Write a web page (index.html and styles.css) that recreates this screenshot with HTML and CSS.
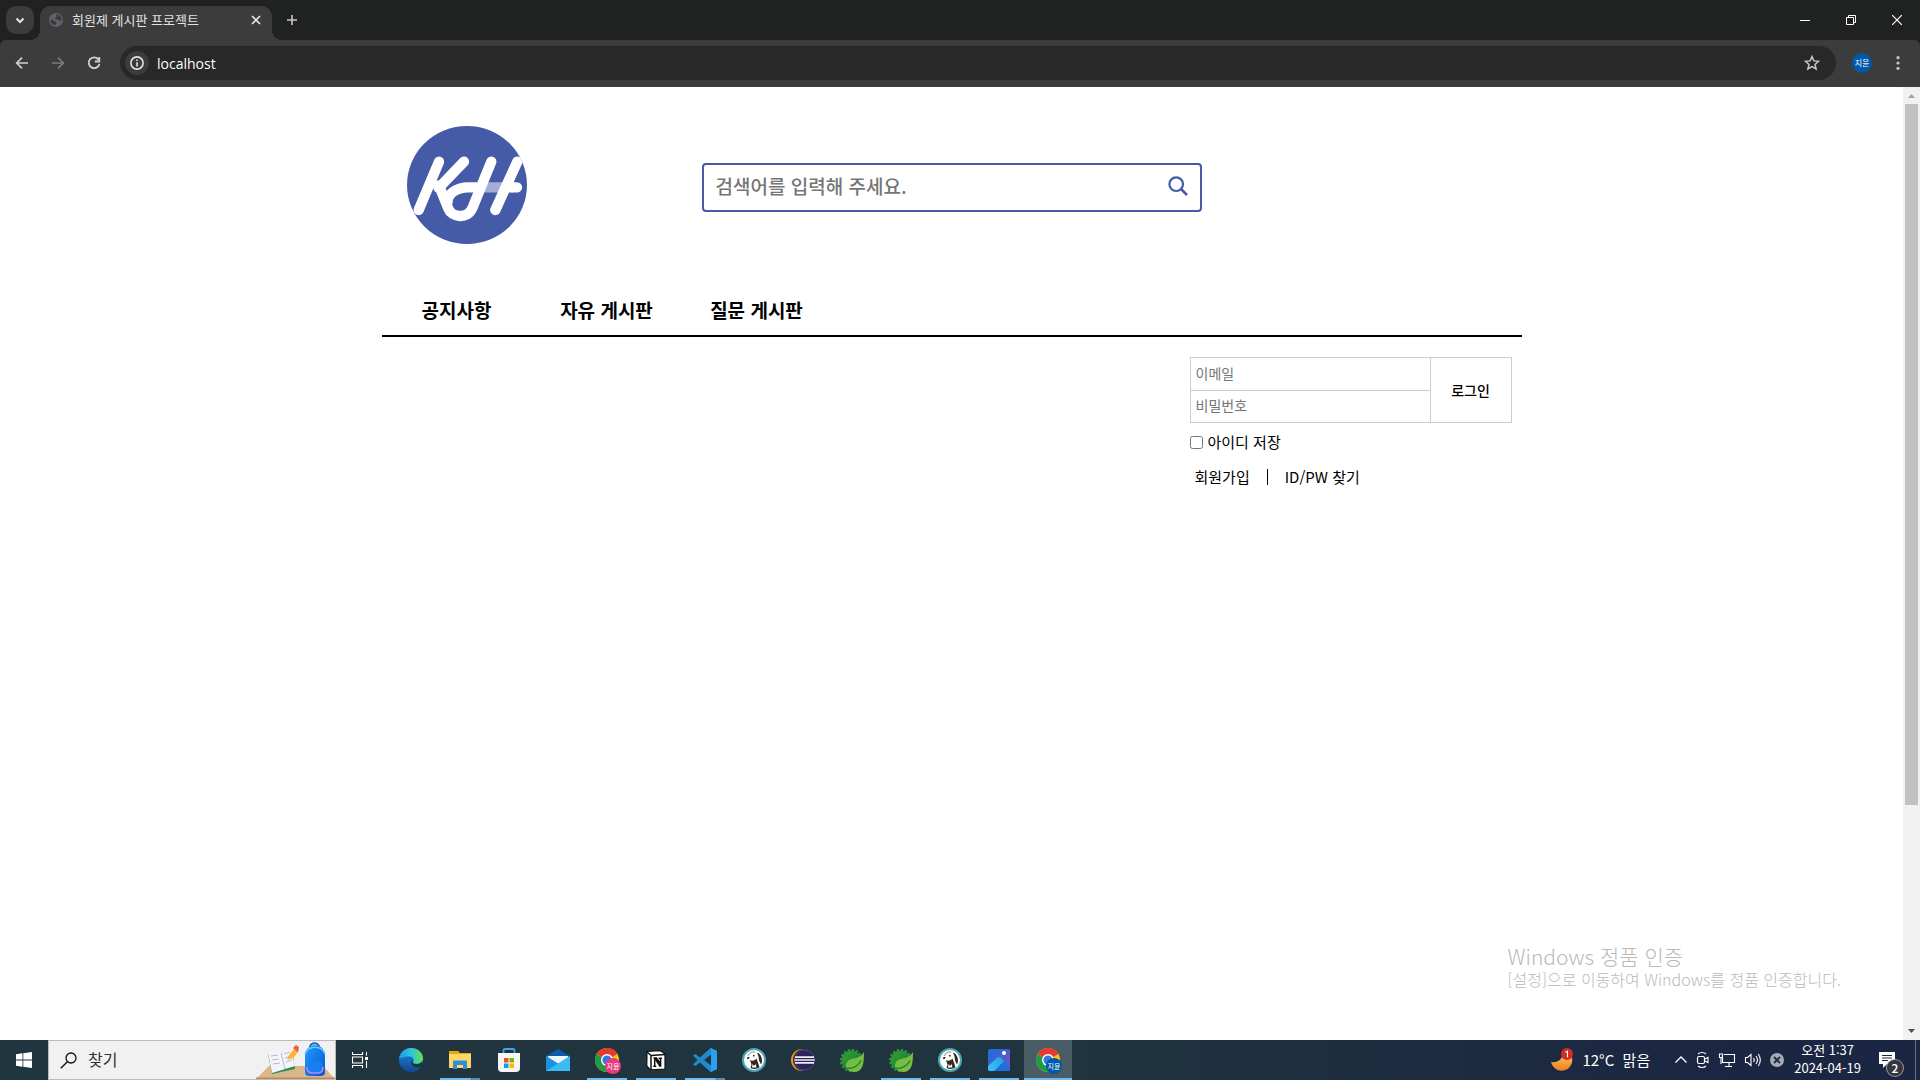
FILE: index.html
```html
<!DOCTYPE html>
<html lang="ko">
<head>
<meta charset="utf-8">
<title>회원제 게시판 프로젝트</title>
<link rel="stylesheet" href="styles.css">
</head>
<body>
<div class="browser">
<header class="tabstrip">
  <button class="tab-search" aria-label="탭 검색"><svg width="16" height="16" viewBox="0 0 16 16"><path d="M4.500 6.500 8 10l3.500-3.500" fill="none" stroke="#e3e3e3" stroke-width="2"/></svg></button>
  <div class="tab">
    <svg width="14" height="14" viewBox="0 0 14 14"><circle cx="7" cy="7" r="7" fill="#5f6368"/><path d="M1.500 7c2-.5 3 .2 4 1.200s2 .6 2 1.800-1 1-1 2.200C4 12.200 1.600 10 1.500 7zM7 1.500c-.2 1.200.8 1 .8 2S6 4.500 6 5.500s2 .7 3 1.500 2.500.8 3.400.4C13 4 10.500 1.500 7 1.500z" fill="#37393b"/></svg>
    <span class="tab-title">회원제 게시판 프로젝트</span>
    <button class="tab-close" aria-label="탭 닫기"><svg width="10" height="10" viewBox="0 0 10 10"><path d="m1 1 8 8M9 1 1 9" stroke="#e3e3e3" stroke-width="1.700"/></svg></button>
  </div>
  <button class="new-tab" aria-label="새 탭"><svg width="12" height="12" viewBox="0 0 12 12"><path d="M6 1v10M1 6h10" stroke="#c7c7c7" stroke-width="1.600"/></svg></button>
  <div class="window-buttons">
    <button aria-label="최소화"><svg width="10" height="10" viewBox="0 0 10 10"><path d="M0 5.500h10" stroke="#fff"/></svg></button>
    <button aria-label="이전 크기로"><svg width="10" height="10" viewBox="0 0 10 10"><path d="M.5 2.500h7v7h-7zM2.500 2.500v-2h7v7h-2" fill="none" stroke="#fff"/></svg></button>
    <button aria-label="닫기"><svg width="10" height="10" viewBox="0 0 10 10"><path d="m0 0 10 10M10 0 0 10" stroke="#fff" stroke-width="1.200"/></svg></button>
  </div>
</header>

<div class="toolbar">
  <div class="nav-buttons">
    <button aria-label="뒤로"><svg width="14" height="14" viewBox="0 0 14 14"><path d="M13 7H2m5-5.300L1.700 7 7 12.300" fill="none" stroke="#d0d0d0" stroke-width="1.700"/></svg></button>
    <button aria-label="앞으로"><svg width="14" height="14" viewBox="0 0 14 14"><path d="M1 7h11M7 1.700 12.300 7 7 12.300" fill="none" stroke="#7c7c7c" stroke-width="1.700"/></svg></button>
    <button aria-label="새로고침"><svg width="14" height="14" viewBox="0 0 14 14"><path d="M11.300 3.300A5.400 5.400 0 1 0 12.400 8M12.300 1v4.500H7.800" fill="none" stroke="#d0d0d0" stroke-width="1.800"/></svg></button>
  </div>
  <div class="omnibox">
    <button class="site-info" aria-label="사이트 정보"><svg width="14" height="14" viewBox="0 0 14 14"><circle cx="7" cy="7" r="6.100" fill="none" stroke="#e3e3e3" stroke-width="1.600"/><path d="M7 6.200v4.200M7 3.500v1.600" stroke="#e3e3e3" stroke-width="1.600"/></svg></button>
    <input class="address" type="text" value="localhost" aria-label="주소창">
    <button class="star" aria-label="북마크"><svg width="16" height="16" viewBox="0 0 16 16"><path d="m8 1.600 1.900 4.300 4.700.4-3.600 3.100 1.100 4.600L8 11.600 3.900 14 5 9.400 1.400 6.300l4.700-.4z" fill="none" stroke="#c7c7c7" stroke-width="1.500"/></svg></button>
  </div>
  <button class="profile">지윤</button>
  <button class="menu" aria-label="메뉴"><svg width="4" height="14" viewBox="0 0 4 14"><g fill="#c7c7c7"><circle cx="2" cy="1.700" r="1.600"/><circle cx="2" cy="7" r="1.600"/><circle cx="2" cy="12.300" r="1.600"/></g></svg></button>
</div>
</div>

<div class="viewport">
  <main class="page">
    <div class="site-header">
      <a href="#" class="logo" aria-label="KH">
        <svg width="120" height="118" viewBox="81 48 360 354">
          <defs><clipPath id="disc"><ellipse cx="261" cy="225" rx="180" ry="177"/></clipPath></defs>
          <ellipse cx="261" cy="225" rx="180" ry="177" fill="#465ba8"/>
          <g clip-path="url(#disc)" fill="none" stroke="#fff" stroke-width="31" stroke-linecap="round" stroke-linejoin="round">
            <path d="M310 232h90" stroke="#a5aed5" stroke-linecap="butt"/>
            <path d="M177 155 116 300M252 155l-76 79M177 226l28 70c9 24 57 36 73-4L334 155"/>
            <path d="M305 232h-40c-35 0-68 20-62 52"  stroke-linecap="butt"/>
            <path d="M412 155l-66 145M394 232h17"/>
          </g>
        </svg>
      </a>
      <form class="search">
        <input type="search" placeholder="검색어를 입력해 주세요." aria-label="검색어">
        <button type="button" aria-label="검색"><svg width="20" height="20" viewBox="0 0 20 20"><circle cx="8.200" cy="8.200" r="6.800" fill="none" stroke="#455ba8" stroke-width="2.200"/><path d="m13 13 6 6" stroke="#455ba8" stroke-width="2.600"/></svg></button>
      </form>
    </div>
    <nav class="site-nav"><a href="#">공지사항</a><a href="#">자유 게시판</a><a href="#">질문 게시판</a></nav>
    <form class="login">
      <div class="login-box">
        <div class="fields">
          <input type="text" placeholder="이메일" aria-label="이메일">
          <input type="password" placeholder="비밀번호" aria-label="비밀번호">
        </div>
        <button type="button">로그인</button>
      </div>
      <label class="save"><input type="checkbox">아이디 저장</label>
      <div class="links"><a href="#">회원가입</a><span class="bar"></span><a href="#">ID/PW 찾기</a></div>
    </form>
  </main>
  <div class="scrollbar">
    <svg width="17" height="17" viewBox="0 0 17 17"><path d="m5 11 3.500-4 3.500 4z" fill="#a3a3a3"/></svg>
    <div class="track"><div class="thumb"></div></div>
    <svg width="17" height="17" viewBox="0 0 17 17"><path d="m5 6 3.500 4L12 6z" fill="#505050"/></svg>
  </div>
  <div class="watermark"><p class="mark-title">Windows 정품 인증</p><p class="mark-text">[설정]으로 이동하여 Windows를 정품 인증합니다.</p></div>
</div>

<svg class="symbols" width="0" height="0">
  <defs>
    <linearGradient id="edgeA" x1="0" y1="0" x2="1" y2="0"><stop offset="0" stop-color="#1c9be6"/><stop offset=".5" stop-color="#2fc2df"/><stop offset="1" stop-color="#62e24b"/></linearGradient>
    <linearGradient id="edgeB" x1="0" y1="0" x2="0" y2="1"><stop offset="0" stop-color="#1b87dc"/><stop offset="1" stop-color="#104a91"/></linearGradient>
    <linearGradient id="leaf" x1="0" y1="0" x2="1" y2="1"><stop offset="0" stop-color="#3a9f35"/><stop offset="1" stop-color="#0a7a35"/></linearGradient>
    <linearGradient id="photo" x1="0" y1="0" x2="1" y2="1"><stop offset="0" stop-color="#1273d6"/><stop offset=".5" stop-color="#4a5fd0"/><stop offset="1" stop-color="#8b49bd"/></linearGradient>
    <linearGradient id="hill" x1="0" y1="1" x2="1" y2="0"><stop offset="0" stop-color="#35c6f5"/><stop offset="1" stop-color="#2b9fe8"/></linearGradient>
    <linearGradient id="moon" x1="0" y1="0" x2="0" y2="1"><stop offset="0" stop-color="#ffcb66"/><stop offset="1" stop-color="#ef7e1a"/></linearGradient>
    <linearGradient id="bag" x1="0" y1="0" x2="1" y2="1"><stop offset="0" stop-color="#1ba0ff"/><stop offset="1" stop-color="#0a56cf"/></linearGradient>
  </defs>
  <symbol id="chrome" viewBox="0 0 24 24"><circle cx="12" cy="12" r="12" fill="#fbc116"/><path d="M12 12 1.600 6A12 12 0 0 1 22.400 6z" fill="#e33b2e"/><path d="M12 0a12 12 0 0 1 10.400 6H12z" fill="#e33b2e"/><path d="M1.600 6A12 12 0 0 0 12 24l5.200-9L12 12z" fill="#229a48"/><circle cx="12" cy="12" r="6" fill="#fff"/><circle cx="12" cy="12" r="4.600" fill="#3478e5"/></symbol>
  <symbol id="spring" viewBox="0 0 24 24"><circle cx="11.500" cy="12.500" r="10" fill="url(#leaf)"/><circle cx="11.500" cy="12.500" r="10.300" fill="none" stroke="#2f9136" stroke-width="2.600" stroke-dasharray="2.400 1.640"/><path d="M24 4c0 12-1 20-10 20C5 24 4 15 9 12c5-2.500 11-1 15-8z" fill="#76bd42"/><path d="M5 20.500c7 .5 13-2 16-8" fill="none" stroke="#217d34" stroke-width="1.400"/></symbol>
  <symbol id="beaver" viewBox="0 0 24 24"><circle cx="12" cy="12" r="11" fill="#fff" stroke="#48a9b4" stroke-width="2"/><path d="M15 4.500c3 1 5 4 5 8 0 2-.5 3-1 4l-2-4-.5-4z" fill="#382923"/><path d="M8 12c2 1.500 5 .5 6.500-1.500l1.500 4 1.500 5c-2 1.500-6 2-9 .5l1-3.500z" fill="#382923"/><path d="m10.500 16 1.500 2 1.500-2 1 3.500h-4.500z" fill="#fff"/><path d="M5.500 9h2.200l-1 2H5zM11 7h1.600v1.500H11z" fill="#382923"/><path d="M6 8c1-3 4-4.500 7-4" fill="none" stroke="#665a55" stroke-width=".7"/></symbol>
</svg>

<footer class="taskbar">
  <button class="start" aria-label="시작"><svg width="16" height="16" viewBox="0 0 16 16"><path d="M0 2.200 6.500 1.300v6.200H0zM7.300 1.200 16 0v7.500H7.300zM0 8.400h6.500v6.300L0 13.800zM7.300 8.400H16V16l-8.700-1.200z" fill="#fff"/></svg></button>
  <div class="finder">
    <svg width="17" height="17" viewBox="0 0 17 17"><circle cx="11" cy="6" r="5" fill="none" stroke="#111" stroke-width="1.300"/><path d="M7.300 9.700.8 16.200" stroke="#111" stroke-width="1.400"/></svg>
    <input type="text" placeholder="찾기" aria-label="찾기">
    <svg width="79" height="38" viewBox="0 0 79 38"><path d="M13 25h54l12 13H0z" fill="#dcb68b"/><path d="M0 36.500h79V38H0z" fill="#b98a5a"/><path d="m12 13 4 20 23-5-2-14z" fill="#2b8f4a"/><path d="m12 12 11-2 3 2 9-4 4 17-10 3-3 1-10 3z" fill="#f4f5fa"/><path d="m25 12 4 16M15 15l7-1M16 19l7-1M17 23l7-1M28 13l6-2M29 17l6-2M30 21l6-2" stroke="#b6bccb" stroke-width="1"/><path d="m31 19 2-5 6-7 4 3-6 7z" fill="#ffb13b"/><path d="m37 7 3-3 3 2-1 5z" fill="#f25a4a"/><path d="M54 6c0-5 9-5 9 0" fill="none" stroke="#1668d0" stroke-width="2"/><path d="M49 15c0-6 4-11 10-11s10 5 10 11v16c0 3-2 4-4 4H53c-2 0-4-1-4-4z" fill="url(#bag)"/><path d="M49 13c3-9 17-9 20 0" fill="none" stroke="#73c5ff" stroke-width="1.500"/><path d="M51 27c0-11 16-11 16 0v4H51z" fill="#167ef0"/><path d="M51 26c0 6 3 6 8 6s8 0 8-6" fill="none" stroke="#b785ff" stroke-width="1.500"/></svg>
  </div>
  <button class="task" aria-label="작업 보기"><svg width="17" height="16" viewBox="0 0 17 16"><path d="M.5 0v2.500h10V0M.5 16v-2.500h10V16M.5 5h10v6H.5zM14.500 0v3.500M14.500 9v7" fill="none" stroke="#fff" stroke-width="1.100"/><path d="M13 5h3v3h-3z" fill="#fff"/></svg></button>
  <div class="apps">
    <button class="task" aria-label="Edge"><svg width="24" height="24" viewBox="0 0 24 24"><circle cx="12" cy="12" r="12" fill="url(#edgeB)"/><path d="M0 11C1 4 6 0 12 0c7 0 12 5 12 10 0 4-3 6-6.500 6-3 0-4-1-3.500-2 1.500-2 .5-5-3-5.500C6 8 1 10 0 11z" fill="url(#edgeA)"/><path d="M14 14c-.5 1 .5 2 3.500 2 2.500 0 4-.8 5.500-2.500v4C21 20 17 20 14.500 18.500 12 17 12 13.500 13.500 12z" fill="#20363f"/></svg></button>
    <button class="task run stack" aria-label="파일 탐색기"><svg width="22" height="20" viewBox="0 0 22 20"><path d="M0 1h9l2 2h11v15H0z" fill="#e9a60e"/><path d="M0 4h22v14H0z" fill="#ffd669"/><path d="M4 10.500h14V19h-4v-4H8v4H4z" fill="#2f8fd8"/></svg></button>
    <button class="task" aria-label="Microsoft Store"><svg width="24" height="24" viewBox="0 0 24 24"><path d="M6.500 6V2.500c0-1 .5-1.500 1.500-1.500h8c1 0 1.500.5 1.500 1.500V6" fill="none" stroke="#38a9ea" stroke-width="1.800"/><path d="M1 5h22v15q0 4-4 4H5q-4 0-4-4z" fill="#f5f5f5"/><path d="M7 10h4.500v4.500H7z" fill="#f25022"/><path d="M12.500 10H17v4.500h-4.500z" fill="#7fba00"/><path d="M7 15.500h4.500V20H7z" fill="#00a4ef"/><path d="M12.500 15.500H17V20h-4.500z" fill="#ffb900"/></svg></button>
    <button class="task" aria-label="메일"><svg width="24" height="24" viewBox="0 0 24 24"><path d="M0 8 12 1l12 7v3H0z" fill="#0d5cab"/><path d="M2 8h20v9H2z" fill="#f2f5f8"/><path d="M0 8l12 8 12-8v15H0z" fill="#29a9ec"/><path d="m0 8 24 15H0z" fill="#1c8fdf"/><path d="M24 8 0 23h24z" fill="#38bcf3"/></svg></button>
    <button class="task run" aria-label="Chrome 지윤"><svg width="24" height="24"><use href="#chrome"/></svg><span class="badge pink">지윤</span></button>
    <button class="task run" aria-label="Notion"><svg width="20" height="20" viewBox="0 0 20 20"><path d="M1 1.500 14 .6 19 4v15l-14.500.8L.8 16z" fill="#fff" stroke="#111" stroke-width="1.200"/><path d="m1 2 4 3.500v14M5 5.500 19 4.500" fill="none" stroke="#111" stroke-width="1.500"/><path d="M7.500 8h3l4 6V9M8.700 8v8M7.300 16.200h3M12.700 8.300h3.200M14.600 8.500v8" fill="none" stroke="#111" stroke-width="1.500"/><path d="m9 8 5.500 8.500" stroke="#111" stroke-width="2.200"/></svg></button>
    <button class="task run stack" aria-label="VS Code"><svg width="24" height="24" viewBox="0 0 24 24"><path d="m17.500 0 6.500 3v18l-6.500 3L7 14.500 2.500 18 0 16.500 4.500 12 0 7.500 2.500 6 7 9.500zM18 6.500 11 12l7 5.500z" fill="#2489ca" fill-rule="evenodd"/><path d="m18 0 6 3v18l-6 3z" fill="#2ba0f0"/></svg></button>
    <button class="task" aria-label="DBeaver"><svg width="24" height="24"><use href="#beaver"/></svg></button>
    <button class="task" aria-label="Eclipse"><svg width="24" height="24" viewBox="0 0 24 24"><circle cx="11" cy="12" r="11" fill="#f7941e"/><circle cx="13" cy="12" r="11" fill="#20343f"/><circle cx="13.500" cy="12" r="10" fill="#2c2255" stroke="#51458a"/><path d="M4 9.200h19M3.300 12h20.400M4 14.800h19" stroke="#f0edf8" stroke-width="1.700"/></svg></button>
    <button class="task" aria-label="Spring"><svg width="24" height="24"><use href="#spring"/></svg></button>
    <button class="task run" aria-label="Spring Tools"><svg width="24" height="24"><use href="#spring"/></svg></button>
    <button class="task run" aria-label="DBeaver"><svg width="24" height="24"><use href="#beaver"/></svg></button>
    <button class="task run" aria-label="사진"><svg width="22" height="22" viewBox="0 0 22 22"><rect width="22" height="22" rx="2" fill="url(#photo)"/><path d="m3 22 7-12q2-2 4 0l8 8v2q0 2-2 2z" fill="#1f70dc"/><path d="m0 17 9-8q2-2 4 0l3 3-10 10H2q-2 0-2-2z" fill="url(#hill)"/><circle cx="16" cy="4" r="2" fill="#fff"/></svg></button>
    <button class="task run active" aria-label="Chrome 지윤"><svg width="24" height="24"><use href="#chrome"/></svg><span class="badge blue">지윤</span></button>
  </div>
  <div class="tray">
    <button class="weather"><svg width="24" height="24" viewBox="0 0 24 24"><path d="M1 14c5 1 11-1 13-10 8 1 10 8 7 13-4 8-17 8-20-3z" fill="url(#moon)"/><circle cx="17" cy="6" r="6" fill="#cf2e25"/><path d="m15.500 4.500 2-1.300v6" fill="none" stroke="#fff" stroke-width="1.100"/></svg><span>12°C&nbsp; 맑음</span></button>
    <div class="tray-icons">
      <svg width="14" height="18" viewBox="0 0 14 18"><path d="m1.500 11.500 5.500-5.500 5.500 5.500" fill="none" stroke="#fff" stroke-width="1.300"/></svg>
      <svg width="14" height="18" viewBox="0 0 14 18"><rect x="1.500" y="5.500" width="7" height="7" rx="1.500" fill="none" stroke="#fff" stroke-width="1.200"/><path d="m9 8 3-1.500v5L9 10M2 3c2-2 6-2 8 0M2 15c2 2 6 2 8 0" fill="none" stroke="#fff" stroke-width="1.100"/></svg>
      <svg width="18" height="18" viewBox="0 0 18 18"><path d="M6 3.500h10.500v8H4.500V7M11 11.500v4M7 15.500h7M1.500 3v3.500h3V3zM3 6.500V13" fill="none" stroke="#fff" stroke-width="1.100"/></svg>
      <svg width="18" height="18" viewBox="0 0 18 18"><path d="M1.500 6.500h2L7 3.500v11l-3.500-3h-2zM9.500 7q1.500 2 0 4M12 5q3 4 0 8M14.300 3q4 6 0 12" fill="none" stroke="#fff" stroke-width="1.100"/></svg>
      <svg width="14" height="18" viewBox="0 0 14 18"><circle cx="7" cy="9" r="7" fill="#a7abb5"/><path d="m4 6 6 6m0-6-6 6" stroke="#1d2840" stroke-width="1.800"/></svg>
    </div>
    <div class="clock"><span>오전 1:37</span><span>2024-04-19</span></div>
    <button class="notices" aria-label="알림"><svg width="16" height="16" viewBox="0 0 16 16"><path d="M0 0h16v12H8l-4 4v-4H0z" fill="#fff"/><path d="M3 3.500h10M3 6h10M3 8.500h6" stroke="#1b2642"/></svg><span class="count">2</span></button>
    <div class="peek"></div>
  </div>
</footer>
</body>
</html>
```
FILE: styles.css
```css
* { box-sizing: border-box; }
body {
  margin: 0;
  min-height: 100vh;
  display: flex;
  flex-direction: column;
  background: #fff;
  color: #000;
  font-family: "Noto Sans CJK KR", sans-serif;
  font-size: 14px;
}
button { border: 0; padding: 0; margin: 0; background: none; color: inherit; font: inherit; }
input { border: 0; padding: 0; margin: 0; background: none; font: inherit; outline: 0; min-width: 0; }
a { color: inherit; text-decoration: none; }
p { margin: 0; }
svg { display: block; flex: none; }
.symbols { position: absolute; }

/* browser frame */
.browser { background: #202221; color: #e3e3e3; }
.tabstrip { display: flex; height: 40px; }
.tab-search {
  width: 28px; height: 28px; margin: 6px 6px 0; border-radius: 10px; background: #3c3c3c;
  display: grid; place-items: center;
}
.tab {
  position: relative; display: flex; align-items: center; width: 232px; margin-top: 6px;
  padding: 0 10px 6px 9px; background: #3c3c3c; border-radius: 10px 10px 0 0; font-size: 13px;
}
.tab::before, .tab::after { content: ""; position: absolute; bottom: 0; width: 10px; height: 10px; }
.tab::before { left: -10px; background: radial-gradient(circle at 0 0, #202221 10px, #3c3c3c 10px); }
.tab::after { right: -10px; background: radial-gradient(circle at 100% 0, #202221 10px, #3c3c3c 10px); }
.tab-title { flex: 1; margin-left: 9px; line-height: 16px; white-space: nowrap; }
.tab-close, .new-tab { display: grid; place-items: center; }
.tab-close { width: 12px; }
.new-tab { width: 40px; height: 40px; }
.window-buttons { display: flex; margin-left: auto; }
.window-buttons button { width: 46px; display: grid; place-items: center; }
.toolbar {
  display: flex; align-items: center; height: 47px; padding-bottom: 1px; background: #3c3c3c; color: #fff;
  border-radius: 6px 6px 0 0;
}
.nav-buttons { display: flex; padding-left: 4px; width: 120px; }
.nav-buttons button { width: 36px; height: 36px; display: grid; place-items: center; }
.omnibox { flex: 1; display: flex; align-items: center; height: 34px; padding: 0 16px 0 5px; border-radius: 17px; background: #282828; }
.site-info { width: 24px; height: 24px; border-radius: 12px; background: #3c3c3c; display: grid; place-items: center; }
.address { flex: 1; margin-left: 8px; color: #fff; font-family: "Open Sans", sans-serif; }
.profile { width: 20px; height: 20px; margin: 0 24px 0 16px; border-radius: 10px; background: #0059a6; font-size: 8px; line-height: 20px; }
.menu { width: 4px; margin-right: 20px; }

/* site */
.viewport { position: relative; flex: 1; display: flex; }
.page { flex: 1; }
.site-header, .site-nav, .login { max-width: 1140px; margin: 0 auto; }
.site-header { display: flex; align-items: flex-start; gap: 175px; min-height: 198px; padding: 39px 0 0 25px; }
.search { display: flex; width: 500px; height: 49px; margin-top: 37px; padding: 0 12px 4px; border: 2px solid #455ba8; border-radius: 4px; }
.search input { flex: 1; font-size: 19px; font-weight: 500; }
input::placeholder { color: #757575; opacity: 1; }
.site-nav { display: flex; height: 52px; border-bottom: 2px solid #000; }
.site-nav a { width: 150px; text-align: center; font-size: 19px; font-weight: 700; line-height: 50px; }
.login { display: flex; flex-direction: column; padding: 20px 10px 0 808px; }
.login-box { display: flex; height: 66px; border: 1px solid #ccc; }
.fields { width: 240px; display: flex; flex-direction: column; border-right: 1px solid #ccc; }
.fields input { flex: 1; padding: 0 5px 2px; font-size: 14px; }
.fields input + input { border-top: 1px solid #ccc; }
.login-box button { flex: 1; font-weight: 500; font-size: 14px; }
.save { display: flex; align-items: center; gap: 5px; margin-top: 8px; font-size: 15px; line-height: 22px; }
.save input { width: 13px; height: 13px; }
.links { display: flex; align-items: center; padding-left: 5px; margin-top: 13px; font-size: 15px; line-height: 22px; }
.bar { width: 1px; height: 16px; margin: 0 17px; background: #000; }

.scrollbar { width: 17px; display: flex; flex-direction: column; background: #f1f1f1; }
.track { flex: 1; padding: 0 2px; }
.thumb { height: 76.3%; background: #c1c1c1; }
.watermark { position: absolute; right: 79px; bottom: 50px; color: #b9b9b9; }
.mark-title { font-size: 21px; font-weight: 300; line-height: 24px; }
.mark-text { font-size: 16px; font-weight: 300; line-height: 22px; }

/* taskbar */
.taskbar { display: flex; height: 40px; background: linear-gradient(90deg, #20363f, #20343f 55%, #1b2642 90%); color: #fff; }
.start, .task { position: relative; width: 48px; height: 40px; display: grid; place-items: center; }
.finder { display: flex; align-items: center; width: 288px; border: 1px solid #bbb; background: #f1f1f1; padding-left: 11px; }
.finder input { flex: 1; margin-left: 11px; padding-bottom: 2px; font-size: 16px; }
.finder input::placeholder { color: #333; }
.apps { display: flex; gap: 1px; margin-left: 3px; }
.run::after { content: ""; position: absolute; left: 4px; right: 4px; bottom: 0; height: 2px; background: #76b9ed; }
.stack::after { background: linear-gradient(90deg, #76b9ed 31px, #3b5a70 31px, #5a8db8 32px); }
.active { background: #4a5c66; }
.active::after { left: 0; right: 0; }
.badge { position: absolute; left: 22px; top: 18px; width: 16px; height: 16px; border-radius: 8px; font-size: 7px; line-height: 16px; text-align: center; }
.pink { background: #e73b7c; }
.blue { background: #0059a6; }
.tray { display: flex; align-items: center; margin-left: auto; }
.weather { display: flex; align-items: center; gap: 8px; margin-right: 24px; font-size: 15px; }
.weather span { padding-bottom: 2px; }
.tray-icons { display: flex; align-items: center; gap: 8px; margin-right: 10px; }
.clock { display: flex; flex-direction: column; padding-bottom: 2px; text-align: center; font-size: 13px; line-height: 18px; }
.notices { position: relative; margin: 0 20px 0 18px; }
.count { position: absolute; left: 8px; top: 8px; width: 16px; height: 16px; border-radius: 8px; background: #33363d; box-shadow: 0 0 0 1px #999; font-size: 12px; font-weight: 500; line-height: 15px; }
.peek { width: 5px; height: 40px; border-left: 1px solid #66707f; }
```
